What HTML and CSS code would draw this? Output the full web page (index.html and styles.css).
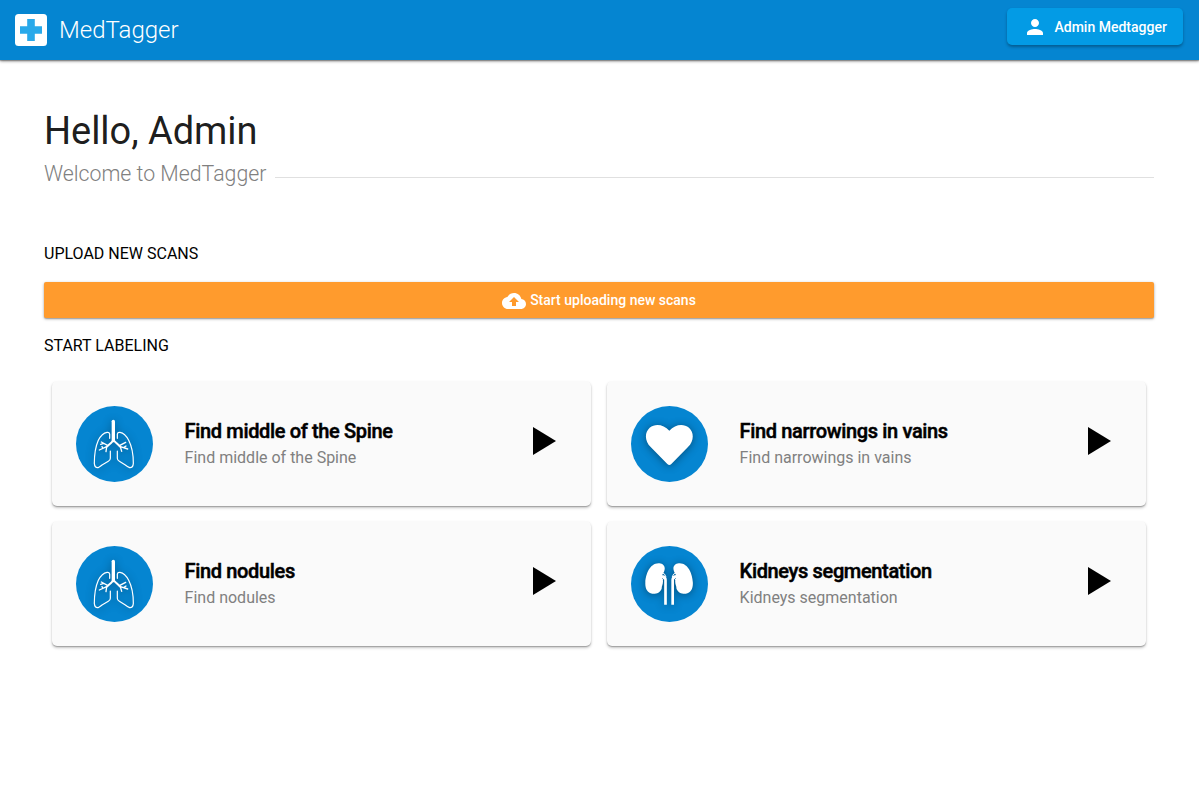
FILE: index.html
```html
<!DOCTYPE html>
<html lang="en">
<head>
<meta charset="utf-8">
<title>MedTagger</title>
<link rel="stylesheet" href="styles.css">
</head>
<body>
<svg class="defs" width="0" height="0">
  <symbol id="lungs" viewBox="18 18 231 228">
    <g fill="none" stroke="#fff" stroke-linecap="round" stroke-linejoin="round">
      <path stroke-width="3.6" d="M119 115V102Q118 96 111 97Q96 99 85 121Q73 148 73 190Q74 204 84 203Q90 200 96 195L115 184Q121 181 121 175V153M142 115V102Q143 96 150 97Q165 99 176 121Q190 148 190 190Q189 204 179 203Q172 200 166 195L148 184Q142 181 142 175V153"/>
      <path stroke-width="10" d="M130 64V122"/>
      <path stroke-width="6" d="M130 121L122 130L110 140M131 121L140 130L151 140"/>
      <path stroke-width="4" d="M114 137L94 126M110 140L88 150M110 140L108 155M101 130L92 133M148 137L167 127M151 140L173 147M151 140L155 154M162 142L168 138M99 145L96 140"/>
    </g>
  </symbol>
  <symbol id="heart" viewBox="18 18 231 228">
    <path fill="#fff" d="M127 192L77 141C59 124 58 98 74 83C91 69 116 73 133 92C150 73 175 69 192 83C208 98 207 124 189 141L139 192Q133 198 127 192Z"/>
  </symbol>
  <symbol id="kidneys" viewBox="18 18 231 228">
    <g id="kidney">
      <path fill="#fff" d="M103 70C116 71 122 82 118 92C117 98 113 99 112 105C110 113 114 117 114 124C114 134 110 138 110 146C105 158 94 162 82 161C66 159 60 145 61 127C62 103 75 68 103 70Z"/>
      <path fill="none" stroke="#fff" stroke-width="8" d="M121.500 194V119Q121.500 111 111 109"/>
      <path fill="none" stroke="#fff" stroke-width="3" d="M111 99Q120 99 123 111M110 122L118 113"/>
    </g>
    <use href="#kidney" transform="translate(264.5 0) scale(-1 1)"/>
  </symbol>
</svg>
<header class="toolbar">
  <div class="brand">
    <svg class="logo" viewBox="0 0 32 32"><rect width="32" height="32" rx="3.5" fill="#fff"/><path fill="#29a9ea" d="M12.2 5h7.6v7.3H27v7.500h-7.200V27h-7.600v-7.200H5v-7.500h7.200z"/></svg>
    <span class="brand-name">MedTagger</span>
  </div>
  <button class="user-button">
    <svg class="user-icon" viewBox="0 0 24 24"><path fill="currentColor" d="M12 12c2.210 0 4-1.790 4-4s-1.790-4-4-4-4 1.790-4 4 1.790 4 4 4zm0 2c-2.670 0-8 1.340-8 4v2h16v-2c0-2.660-5.330-4-8-4z"/></svg>
    <span>Admin Medtagger</span>
  </button>
</header>
<main class="page">
  <h1 class="greeting">Hello, Admin</h1>
  <div class="welcome"><span class="welcome-text">Welcome to MedTagger</span><i class="rule"></i></div>
  <h2 class="section upload-title">UPLOAD NEW SCANS</h2>
  <button class="upload-button">
    <svg class="cloud-icon" viewBox="0 0 24 24"><path fill="currentColor" d="M19.350 10.040C18.670 6.590 15.640 4 12 4 9.110 4 6.600 5.640 5.350 8.040 2.340 8.360 0 10.910 0 14c0 3.310 2.690 6 6 6h13c2.760 0 5-2.240 5-5 0-2.640-2.050-4.780-4.650-4.960zM14 13v4h-4v-4H7l5-5 5 5h-3z"/></svg>
    <span>Start uploading new scans</span>
  </button>
  <h2 class="section label-title">START LABELING</h2>
  <div class="cards">
    <article class="card">
      <div class="avatar"><svg class="glyph"><use href="#lungs"/></svg></div>
      <div class="text"><h3 class="card-title">Find middle of the Spine</h3><p class="card-sub">Find middle of the Spine</p></div>
      <svg class="play" viewBox="0 0 23 28"><path d="M0 0L23 14L0 28z"/></svg>
    </article>
    <article class="card">
      <div class="avatar"><svg class="glyph"><use href="#heart"/></svg></div>
      <div class="text"><h3 class="card-title">Find narrowings in vains</h3><p class="card-sub">Find narrowings in vains</p></div>
      <svg class="play" viewBox="0 0 23 28"><path d="M0 0L23 14L0 28z"/></svg>
    </article>
    <article class="card">
      <div class="avatar"><svg class="glyph"><use href="#lungs"/></svg></div>
      <div class="text"><h3 class="card-title">Find nodules</h3><p class="card-sub">Find nodules</p></div>
      <svg class="play" viewBox="0 0 23 28"><path d="M0 0L23 14L0 28z"/></svg>
    </article>
    <article class="card">
      <div class="avatar"><svg class="glyph"><use href="#kidneys"/></svg></div>
      <div class="text"><h3 class="card-title">Kidneys segmentation</h3><p class="card-sub">Kidneys segmentation</p></div>
      <svg class="play" viewBox="0 0 23 28"><path d="M0 0L23 14L0 28z"/></svg>
    </article>
  </div>
</main>
</body>
</html>
```
FILE: styles.css
```css
* { box-sizing: border-box; }
body { margin: 0; min-height: 100vh; background: #fff; color: #000; font-family: Roboto, sans-serif; }
h1, h2, h3, p { margin: 0; }
.defs { display: block; height: 0; }
.toolbar {
  height: 60px; padding: 8px 16px 0 15px;
  display: flex; justify-content: space-between; align-items: flex-start;
  background: #0585d1;
  box-shadow: 0 1px 3px rgba(0,0,0,.5), 0 1px 1px rgba(0,0,0,.2);
}
.brand { display: flex; align-items: center; gap: 12px; height: 44px; color: #fff; }
.logo { width: 32px; height: 32px; }
.brand-name { font-size: 24px; font-weight: 300; line-height: 32px; }
.user-button {
  display: flex; align-items: center; gap: 8px; width: 176px; height: 37px; padding: 0 0 0 15.5px;
  border: 0; border-radius: 5px; background: #039be5; color: #fff;
  font: 500 14px/36px Roboto, sans-serif; white-space: nowrap;
  box-shadow: 0 2px 3px rgba(0,0,0,.3);
}
.user-icon { width: 24px; height: 24px; }
.page { padding: 45px 45px 24px 44px; }
.greeting { font-size: 38px; font-weight: 400; line-height: 52px; height: 50px; letter-spacing: -.05px; color: rgba(0,0,0,.9); }
.welcome { display: flex; align-items: center; gap: 9px; height: 38px; color: #808080; font-size: 21.3px; font-weight: 300; }
.welcome-text { padding-bottom: 2px; }
.rule { flex: 1; height: 1px; margin-top: 7px; background: #e0e0e0; }
.section { font-size: 16px; font-weight: 400; line-height: 20px; }
.upload-title { margin-top: 51px; }
.upload-button {
  display: flex; align-items: center; justify-content: center; gap: 4px;
  width: 100%; height: 36px; margin-top: 18px; padding: 0;
  border: 0; border-radius: 2px; background: #ff9b2d; color: #fff;
  font: 500 14px/36px Roboto, sans-serif;
  box-shadow: 0 1px 3px rgba(0,0,0,.35), 0 1px 1px rgba(0,0,0,.15);
}
.cloud-icon { width: 24px; height: 24px; margin-top: 2px; }
.label-title { margin-top: 18px; }
.cards { display: grid; grid-template-columns: 539px 539px; grid-auto-rows: 125px; gap: 15px 16px; padding: 25px 8px 0; }
.card {
  display: flex; align-items: center; padding: 0 35px 0 24px;
  border-radius: 5px; background: #fafafa;
  box-shadow: 0 2px 3px rgba(0,0,0,.22), 0 1px 1px rgba(0,0,0,.22);
}
.avatar { width: 77px; height: 76px; border-radius: 50%; background: #0585d1; overflow: hidden; }
.glyph { display: block; width: 77px; height: 76px; filter: drop-shadow(0 1px 4px rgba(0,0,0,.4)); }
.text { flex: 1; margin: 1px 0 0 31.6px; }
.card-title { font-size: 20px; font-weight: 500; line-height: 26px; height: 28px; letter-spacing: -.35px; -webkit-text-stroke: .5px #000; }
.card-sub { font-size: 16px; line-height: 24px; color: #808080; }
.play { width: 23px; height: 28px; margin-bottom: 5px; }
```
